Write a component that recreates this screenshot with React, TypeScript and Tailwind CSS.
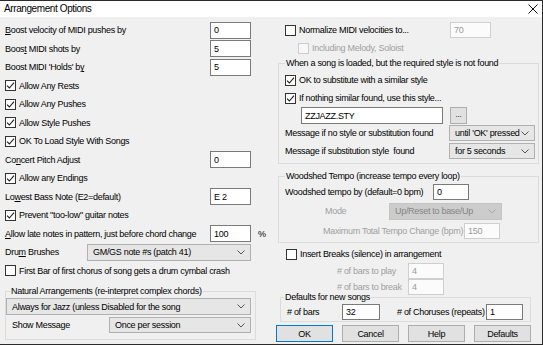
import React from "react";

function Box({ checked, disabled }: { checked?: boolean; disabled?: boolean }) {
  return (
    <span
      className={`w-[11px] h-[11px] border shrink-0 flex items-center justify-center ${
        disabled ? "border-[#cccccc] bg-[#f7f7f7]" : "border-[#333333] bg-white"
      }`}
    >
      {checked && (
        <svg width="9" height="9" viewBox="0 0 9 9">
          <path d="M1 4.6 L3.4 7 L8 1.6" stroke="#1a1a1a" strokeWidth="1.1" fill="none" />
        </svg>
      )}
    </span>
  );
}

function Edit({ value, w, h = "h-[17px]", disabled }: { value: string; w: string; h?: string; disabled?: boolean }) {
  return (
    <div
      className={`${w} ${h} shrink-0 border pl-[3px] flex items-center ${
        disabled ? "border-[#cfcfcf] bg-[#fbfbfb] text-[#9a9a9a]" : "border-[#7a7a7a] bg-white text-black"
      }`}
    >
      {value}
    </div>
  );
}

function Chevron({ disabled }: { disabled?: boolean }) {
  return (
    <svg width="8" height="5" viewBox="0 0 8 5" className="shrink-0">
      <path d="M0.5 0.5 L4 4 L7.5 0.5" stroke={disabled ? "#a8a8a8" : "#555555"} strokeWidth="1" fill="none" />
    </svg>
  );
}

function Combo({ value, w, h = "h-[17px]", disabled }: { value: string; w: string; h?: string; disabled?: boolean }) {
  return (
    <div
      className={`${w} ${h} shrink-0 border flex items-center justify-between pl-[5px] pr-[5px] ${
        disabled ? "border-[#c4c4c4] bg-[#cccccc] text-[#858585]" : "border-[#b0b0b0] bg-[#e6e6e6] text-black"
      }`}
    >
      <span className="whitespace-nowrap">{value}</span>
      <Chevron disabled={disabled} />
    </div>
  );
}

function Btn({ label, focused }: { label: string; focused?: boolean }) {
  return (
    <div
      className={`w-[57px] h-[17px] border bg-[#e1e1e1] flex items-center justify-center ${
        focused ? "border-[#0078d7]" : "border-[#adadad]"
      }`}
    >
      {label}
    </div>
  );
}

function U({ children }: { children: React.ReactNode }) {
  return <span className="underline underline-offset-1">{children}</span>;
}

export default function App() {
  return (
    <div className="w-[543px] h-[345px] bg-[#f0f0f0] border-t border-r border-b border-[#2b2b2b] text-[9px] leading-[12px] tracking-[-0.3px] text-black font-['Liberation_Sans',Arial,sans-serif] whitespace-nowrap overflow-hidden flex flex-col">
      {/* title bar */}
      <div className="h-[16px] bg-white flex items-center justify-between pl-[4px] pr-[4px] shrink-0">
        <span className="text-[10px] tracking-[-0.4px]">Arrangement Options</span>
        <svg width="10" height="10" viewBox="0 0 10 10">
          <path d="M0.5 0.5 L9.5 9.5 M9.5 0.5 L0.5 9.5" stroke="#111" strokeWidth="1" />
        </svg>
      </div>

      <div className="flex flex-1">
        {/* LEFT */}
        <div className="w-[274px] shrink-0 pl-[5px] pt-[4px] flex flex-col">
          <div className="h-[18.5px] flex items-center">
            <span className="w-[205px]"><U>B</U>oost velocity of MIDI pushes by</span>
            <Edit value="0" w="w-[41px]" />
          </div>
          <div className="h-[18.5px] flex items-center">
            <span className="w-[205px]">Boos<U>t</U> MIDI shots by</span>
            <Edit value="5" w="w-[41px]" />
          </div>
          <div className="h-[18.5px] flex items-center">
            <span className="w-[205px]">Boost MIDI 'Holds' b<U>y</U></span>
            <Edit value="5" w="w-[41px]" />
          </div>
          <div className="h-[18.5px] flex items-center gap-[3px]">
            <Box checked />
            <span>Allow Any Rests</span>
          </div>
          <div className="h-[18.5px] flex items-center gap-[3px]">
            <Box checked />
            <span>Allow Any Pushes</span>
          </div>
          <div className="h-[18.5px] flex items-center gap-[3px]">
            <Box checked />
            <span>Allow Style Pushes</span>
          </div>
          <div className="h-[18.5px] flex items-center gap-[3px]">
            <Box checked />
            <span>OK To Load Style With Songs</span>
          </div>
          <div className="h-[18.5px] flex items-center">
            <span className="w-[205px]">Co<U>n</U>cert Pitch Adjust</span>
            <Edit value="0" w="w-[41px]" />
          </div>
          <div className="h-[18.5px] flex items-center gap-[3px]">
            <Box checked />
            <span>Allow any Endings</span>
          </div>
          <div className="h-[18.5px] flex items-center">
            <span className="w-[205px]">Lo<U>w</U>est Bass Note (E2=default)</span>
            <Edit value="E 2" w="w-[41px]" />
          </div>
          <div className="h-[18.5px] flex items-center gap-[3px]">
            <Box checked />
            <span>Prevent "too-low" guitar notes</span>
          </div>
          <div className="h-[18.5px] flex items-center">
            <span className="w-[205px]"><U>A</U>llow late notes in pattern, just before chord change</span>
            <Edit value="100" w="w-[41px]" />
            <span className="ml-[7px]">%</span>
          </div>
          <div className="h-[18.5px] flex items-center">
            <span className="w-[82px]">Dru<U>m</U> Brushes</span>
            <Combo value="GM/GS note #s (patch 41)" w="w-[164px]" />
          </div>
          <div className="h-[18.5px] flex items-center gap-[3px]">
            <Box />
            <span>First Bar of first chorus of song gets a drum cymbal crash</span>
          </div>

          <fieldset className="mt-[5px] w-[251px] border border-[#dcdcdc] pb-[6px]">
            <legend className="ml-[4px] px-[1px]">Natural Arrangements (re-interpret complex chords)</legend>
            <div className="mt-[1px] flex">
              <Combo value="Always for Jazz (unless Disabled for the song" w="w-[245px]" />
            </div>
            <div className="mt-[2px] flex items-center">
              <span className="ml-[6px] w-[97px]">Show Message</span>
              <Combo value="Once per session" w="w-[142px]" h="h-[16px]" />
            </div>
          </fieldset>
        </div>

        {/* RIGHT */}
        <div className="flex-1 pl-[4px] pr-[3px] pt-[4px] flex flex-col">
          <div className="h-[18px] flex items-center">
            <span className="ml-[7px]"><Box /></span>
            <span className="ml-[3px] w-[151px]">Normalize MIDI velocities to...</span>
            <Edit value="70" w="w-[41px]" h="h-[16px]" disabled />
          </div>
          <div className="h-[18px] flex items-center text-[#a0a0a0]">
            <span className="ml-[20px]"><Box disabled /></span>
            <span className="ml-[3px]">Including Melody, Soloist</span>
          </div>

          <fieldset className="border border-[#dcdcdc] pb-[3px]">
            <legend className="ml-[6px] px-[1px]">When a song is loaded, but the required style is not found</legend>
            <div className="mt-[2px] h-[18px] flex items-center">
              <span className="ml-[6px]"><Box checked /></span>
              <span className="ml-[3px]">OK to substitute with a similar style</span>
            </div>
            <div className="h-[18px] flex items-center">
              <span className="ml-[6px]"><Box checked /></span>
              <span className="ml-[3px]">If nothing similar found, use this style...</span>
            </div>
            <div className="h-[17px] flex items-center">
              <span className="ml-[22px]"><Edit value="ZZJAZZ.STY" w="w-[142px]" /></span>
              <div className="ml-[7px] w-[17px] h-[17px] border border-[#adadad] bg-[#e1e1e1] flex items-center justify-center text-[8px] leading-[8px] pb-[2px]">...</div>
            </div>
            <div className="h-[18px] flex items-center">
              <span className="ml-[6px] w-[164px]">Message if no style or substitution found</span>
              <Combo value="until 'OK' pressed" w="w-[86px]" h="h-[16px]" />
            </div>
            <div className="h-[18px] flex items-center">
              <span className="ml-[6px] w-[164px]">Message if substitution style&nbsp; found</span>
              <Combo value="for 5 seconds" w="w-[86px]" h="h-[16px]" />
            </div>
          </fieldset>

          <fieldset className="mt-[6px] border border-[#dcdcdc] pb-[1px]">
            <legend className="ml-[6px] px-[1px]">Woodshed Tempo (increase tempo every loop)</legend>
            <div className="mt-[1px] h-[18px] flex items-center">
              <span className="ml-[6px] w-[148px]">Woodshed tempo by (default=0 bpm)</span>
              <Edit value="0" w="w-[36px]" h="h-[16px]" />
            </div>
            <div className="h-[20px] flex items-center">
              <span className="ml-[46px] w-[64px] text-[#a0a0a0]">Mode</span>
              <Combo value="Up/Reset to base/Up" w="w-[113px]" disabled />
            </div>
            <div className="h-[20px] flex items-center">
              <span className="ml-[44px] w-[141px] text-[#a0a0a0]">Maximum Total Tempo Change (bpm)</span>
              <Edit value="150" w="w-[36px]" h="h-[16px]" disabled />
            </div>
          </fieldset>

          <div className="mt-[2px] h-[18px] flex items-center">
            <span className="ml-[8px]"><Box /></span>
            <span className="ml-[3px]">Insert Breaks (silence) in arrangement</span>
          </div>
          <div className="h-[16px] flex items-center">
            <span className="ml-[59px] w-[71px] text-[#a0a0a0]"># of bars to play</span>
            <Edit value="4" w="w-[36px]" h="h-[16px]" disabled />
          </div>
          <div className="h-[16px] flex items-center">
            <span className="ml-[59px] w-[71px] text-[#a0a0a0]"># of bars to break</span>
            <Edit value="4" w="w-[36px]" h="h-[16px]" disabled />
          </div>

          <fieldset className="-mt-[4px] ml-[2px] mr-[8px] border border-[#dcdcdc] pb-[1px]">
            <legend className="ml-[3px] px-[1px]">Defaults for new songs</legend>
            <div className="h-[17px] flex items-center">
              <span className="ml-[6px] w-[55px]"># of bars</span>
              <Edit value="32" w="w-[38px]" h="h-[16px]" />
              <span className="ml-[17px] w-[89px]"># of Choruses (repeats)</span>
              <Edit value="1" w="w-[37px]" h="h-[16px]" />
            </div>
          </fieldset>

          <div className="mt-[3px] -ml-[2px] flex gap-[9px]">
            <Btn label="OK" focused />
            <Btn label="Cancel" />
            <Btn label="Help" />
            <Btn label="Defaults" />
          </div>
        </div>
      </div>
    </div>
  );
}
